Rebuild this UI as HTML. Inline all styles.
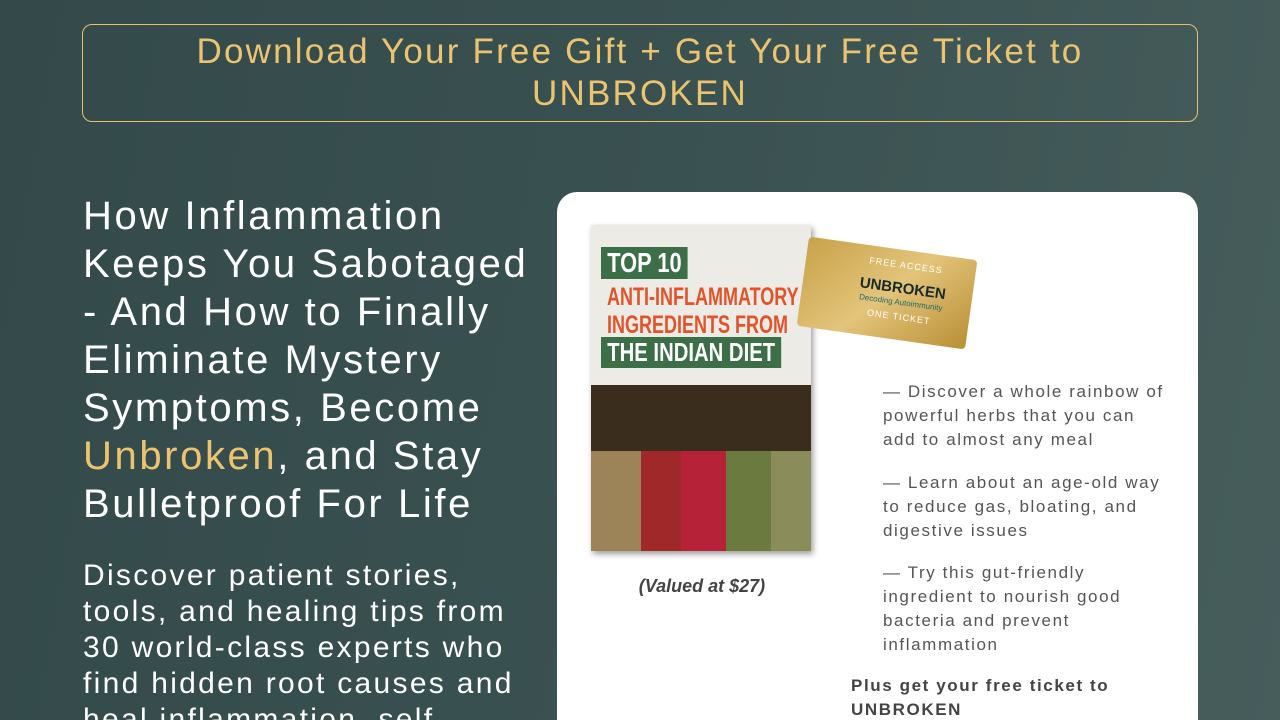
<!DOCTYPE html>
<html><head><meta charset="utf-8"><style>
*{margin:0;padding:0;box-sizing:border-box}
html,body{width:1280px;height:720px;overflow:hidden}
body{font-family:"Liberation Sans",sans-serif;background:linear-gradient(100deg,#33494a 0%,#3a5151 50%,#465d5c 100%);position:relative}
.top{position:absolute;left:82px;top:24px;width:1116px;height:98px;border:1px solid #e8c06a;border-radius:10px;color:#ecc46f;font-size:35px;text-align:center;line-height:42px;padding-top:6px;letter-spacing:2.2px;white-space:nowrap}
h1{position:absolute;left:83px;top:192px;font-weight:normal;color:#fff;font-size:40px;line-height:48px;letter-spacing:2.6px;white-space:nowrap}
h1 span{color:#ecc46f}
.p{position:absolute;left:83px;top:558px;color:#fff;font-size:30px;line-height:36px;letter-spacing:2.3px;white-space:nowrap}
.card{position:absolute;left:557px;top:192px;width:641px;height:560px;background:#fff;border-radius:20px}
.book{position:absolute;left:34px;top:33px;width:220px;height:326px;background:#ecebe6;box-shadow:2px 3px 6px rgba(0,0,0,.4);overflow:hidden}
.book .dark{position:absolute;left:0;top:160px;width:100%;height:170px;background:#3b2d1e}
.book .sp{position:absolute;bottom:0;height:100px}
.cn{transform:scaleX(0.78);transform-origin:left top;white-space:nowrap;font-weight:bold;position:absolute}
.t10{left:10px;top:22px;background:#3c6e47;color:#fff;font-size:28px;padding:0 8px}
.or{left:16px;top:58px;color:#e2532a;font-size:25px;line-height:28px;transform:scaleX(0.72)}
.ind{left:10px;top:112px;background:#3c6e47;color:#fff;font-size:26px;padding:0 8px}
.ticket{position:absolute;left:245px;top:56px;width:170px;height:90px;background:linear-gradient(135deg,#c9a24a,#e3c47a,#b98f35);transform:rotate(8deg);border-radius:4px}
.ticket div{position:absolute;text-align:center}
.val{position:absolute;left:50px;top:384px;width:190px;text-align:center;font-style:italic;font-weight:bold;color:#444;font-size:18px}
.b{position:absolute;left:326px;color:#555;font-size:17px;line-height:24px;letter-spacing:1.6px;white-space:nowrap}
</style></head><body>
<div class="top">Download Your Free Gift + Get Your Free Ticket to<br>UNBROKEN</div>
<h1>How Inflammation<br>Keeps You Sabotaged<br>- And How to Finally<br>Eliminate Mystery<br>Symptoms, Become<br><span>Unbroken</span>, and Stay<br>Bulletproof For Life</h1>
<div class="p">Discover patient stories,<br>tools, and healing tips from<br>30 world-class experts who<br>find hidden root causes and<br>heal inflammation, self-</div>
<div class="card">
 <div class="book">
  <div class="dark"></div>
  <div class="sp" style="left:0;width:50px;background:#9c8458"></div>
  <div class="sp" style="left:50px;width:40px;background:#a02828"></div>
  <div class="sp" style="left:90px;width:45px;background:#b62238"></div>
  <div class="sp" style="left:135px;width:45px;background:#6b7a3e"></div>
  <div class="sp" style="left:180px;width:40px;background:#8a8c5a"></div>
  <div class="cn t10">TOP 10</div>
  <div class="cn or">ANTI-INFLAMMATORY<br>INGREDIENTS FROM</div>
  <div class="cn ind">THE INDIAN DIET</div>
 </div>
 <div class="ticket">
  <div style="left:40px;top:10px;width:120px;font-size:9px;color:#fff;letter-spacing:1px">FREE ACCESS</div>
  <div style="left:40px;top:30px;width:120px;font-size:15px;font-weight:bold;color:#1a2a2a">UNBROKEN</div>
  <div style="left:40px;top:48px;width:120px;font-size:8px;color:#1f6a6a">Decoding Autoimmunity</div>
  <div style="left:40px;top:62px;width:120px;font-size:9px;color:#fff;letter-spacing:1px">ONE TICKET</div>
 </div>
 <div class="val">(Valued at $27)</div>
 <div class="b" style="top:188px">— Discover a whole rainbow of<br>powerful herbs that you can<br>add to almost any meal</div>
 <div class="b" style="top:279px">— Learn about an age-old way<br>to reduce gas, bloating, and<br>digestive issues</div>
 <div class="b" style="top:369px">— Try this gut-friendly<br>ingredient to nourish good<br>bacteria and prevent<br>inflammation</div>
 <div class="b" style="top:482px;left:294px;font-weight:bold;color:#444">Plus get your free ticket to<br>UNBROKEN</div>
</div>
</body></html>
